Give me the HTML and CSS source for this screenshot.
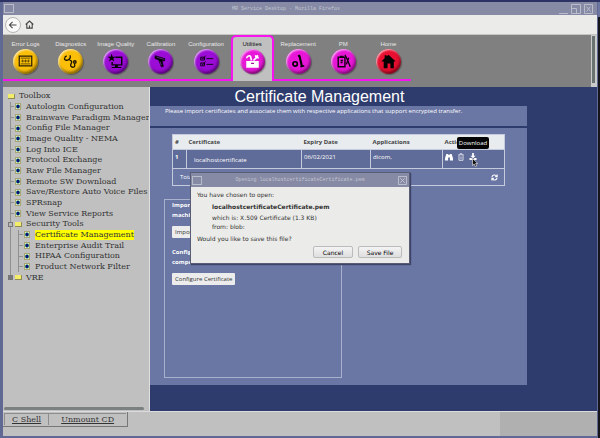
FILE: index.html
```html
<!DOCTYPE html>
<html lang="en">
<head>
    <meta charset="UTF-8">
    <meta name="viewport" content="width=device-width, initial-scale=1.0">
    <title>MR Service Desktop</title>
    <link rel="stylesheet" href="styles.css">
</head>
<body>
    <!-- Window title bar -->
    <header class="titlebar">
        <span class="win-menu"></span>
        <span class="win-title">MR Service Desktop - Mozilla Firefox</span>
        <svg class="win-buttons" viewBox="0 0 36 12" fill="none" stroke="#b9bccb">
            <path d="M1 10.5h9"/>
            <path d="M13.5 1.5h9v9h-9zM13.5 5.5h5v5"/>
            <path d="M26.5 1.5h8v9h-8zM28.5 3.5l4 5M32.5 3.5l-4 5"/>
        </svg>
    </header>

    <div class="toolbar">
        <button class="back" aria-label="Back">
            <svg viewBox="0 0 16 16" fill="none" stroke="#444" stroke-width="1.2"><path d="M12 8H4.500M7.500 4.500L4 8l3.500 3.500"/></svg>
        </button>
        <button class="home-btn" aria-label="Home page">
            <svg viewBox="0 0 10 10" fill="none" stroke="#444" stroke-width="1.2"><path d="M.8 5L5 1.200 9.200 5M2 4.500V9h6V4.500M5 9V6.200"/></svg>
        </button>
    </div>

    <!-- Tabs -->
    <nav class="tabs">
        <ul>
            <li><a href="#errors">Error Logs
                <svg class="ball gold" viewBox="0 0 26 26"><path d="M6.500 7.500h13v10h-13z" fill="none" stroke="#2b2000" stroke-width="1.300"/><path d="M8 9.500h10M8 15.500h10M8.500 12.500h9M10 11v3M13 11v3M16 11v3" stroke="#5c4500" stroke-width=".9"/></svg></a></li>
            <li><a href="#diagnostics">Diagnostics
                <svg class="ball gold" viewBox="0 0 26 26" fill="none" stroke="#1c1500" stroke-width="1.400"><path d="M7.500 8.500C5.500 11 8 12 10 11.500S13.500 9 12.500 6.500M7 8.500l2-1.500M12 11.500c3 .5 2.500 2.500 1.500 4s0 3.500 2 3.500 2.500-2 1.500-3.500"/><circle cx="17.500" cy="13.500" r="1.300"/></svg></a></li>
            <li><a href="#quality">Image Quality
                <svg class="ball purple" viewBox="0 0 26 26"><path d="M13 8.500h6.500v8H9.500v-3" fill="none" stroke="#0a0010" stroke-width="1.500"/><path d="M9 19.800h10v-1.200h-3.500v-2h-3v2H9z"/><path d="M9 5l1 3h3.200l-2.500 2 1 3L9 11.200 6.300 13l1-3-2.500-2H8z"/></svg></a></li>
            <li><a href="#calibration">Calibration
                <svg class="ball purple" viewBox="0 0 26 26"><path d="M7.500 7l10 3-.5 2.500-2.500-.5 1.500 6-2 .700-3-7.500-3.700-1.200z" stroke="#120020" stroke-width=".8"/><path d="M9 8.500l7.500 2.200M12.500 13l1.500 4" stroke="#8a35b5" stroke-width=".7"/></svg></a></li>
            <li><a href="#configuration">Configuration
                <svg class="ball purple" viewBox="0 0 26 26" fill="none" stroke="#12001c"><path d="M7 8.500h4v3H7zM7 14.500h4v3H7zM13 10h7M13 16h7M8 9l1 1.500 3-3.500M8 15l1 1.500 3-3.500"/></svg></a></li>
            <li class="active"><a href="#utilities">Utilities
                <svg class="ball pink" viewBox="0 0 26 26"><path d="M6.500 12.500h13v7h-13z" fill="#fff"/><path d="M7 9.500c0-2 3-3.500 4-1.500l1 4M18.500 6.500l-1.500 2.500-3 3M16 6.500l1 2.500 2.500 0" fill="none" stroke="#fff" stroke-width="1.700"/><path d="M11.500 15h3" stroke="#a0109a" stroke-width="1.300"/></svg></a></li>
            <li><a href="#replacement">Replacement
                <svg class="ball pink" viewBox="0 0 26 26" fill="none" stroke="#000"><circle cx="9.500" cy="15.500" r="2.300" stroke-width="1.700"/><path d="M14 7l2.500 11" stroke-width="2.200"/><path d="M12.500 7.500l2-1M15 18.500l4-1" stroke-width="1.700"/></svg></a></li>
            <li><a href="#pm">PM
                <svg class="ball pink" viewBox="0 0 26 26" fill="none" stroke="#100010"><path d="M7.500 8.500h7v10h-7z" stroke-width="1.500"/><path d="M9.500 8h3.500" stroke-width="2"/><path d="M10 12h2.500M10 14h2M14.500 6l2.500 5 3 7.500M18.500 9l-2.500 7" stroke-width="1.400"/></svg></a></li>
            <li><a href="#home">Home
                <svg class="ball red" viewBox="0 0 26 26"><path d="M5.500 13L9 9.500V6.500h2v1.300L13 6l7.500 7h-2v7H15v-5h-3v5H8v-7z"/></svg></a></li>
        </ul>
        <span class="scroll"></span>
    </nav>

    <main>
        <!-- Toolbox tree -->
        <aside>
            <ul class="tree">
                <li class="root"><i class="folder"></i><a href="#toolbox">Toolbox</a></li>
                <li class="leaf"><i class="page"></i><a href="#t1">Autologin Configuration</a></li>
                <li class="leaf"><i class="page"></i><a href="#t2">Brainwave Paradigm Manager</a></li>
                <li class="leaf"><i class="page"></i><a href="#t3">Config File Manager</a></li>
                <li class="leaf"><i class="page"></i><a href="#t4">Image Quality - NEMA</a></li>
                <li class="leaf"><i class="page"></i><a href="#t5">Log Into ICE</a></li>
                <li class="leaf"><i class="page"></i><a href="#t6">Protocol Exchange</a></li>
                <li class="leaf"><i class="page"></i><a href="#t7">Raw File Manager</a></li>
                <li class="leaf"><i class="page"></i><a href="#t8">Remote SW Download</a></li>
                <li class="leaf"><i class="page"></i><a href="#t9">Save/Restore Auto Voice Files</a></li>
                <li class="leaf"><i class="page"></i><a href="#t10">SPRsnap</a></li>
                <li class="leaf"><i class="page"></i><a href="#t11">View Service Reports</a></li>
                <li class="branch"><i class="toggle"></i><i class="folder"></i><a href="#security">Security Tools</a></li>
                <li class="leaf sub"><i class="page"></i><a class="selected" href="#s1">Certificate Management</a></li>
                <li class="leaf sub"><i class="page"></i><a href="#s2">Enterprise Audit Trail</a></li>
                <li class="leaf sub"><i class="page"></i><a href="#s3">HIPAA Configuration</a></li>
                <li class="leaf sub"><i class="page"></i><a href="#s4">Product Network Filter</a></li>
                <li class="branch last"><i class="toggle plus"></i><i class="folder"></i><a href="#vre">VRE</a></li>
            </ul>
            <span class="scroll-x"></span>
        </aside>

        <section class="content">
            <h1>Certificate Management</h1>
            <p class="intro">Please import certificates and associate them with respective applications that support encrypted transfer.</p>
            <div class="panel">
                <table>
                    <thead>
                        <tr>
                            <th class="num">#</th>
                            <th class="cert">Certificate</th>
                            <th class="expiry">Expiry Date</th>
                            <th class="apps">Applications</th>
                            <th>Actions</th>
                        </tr>
                    </thead>
                    <tbody>
                        <tr>
                            <td><b>1</b></td>
                            <td class="name">localhostcertificate</td>
                            <td>06/02/2021</td>
                            <td>dicom,</td>
                            <td>
                                <div class="actions">
                                    <button aria-label="View"><svg viewBox="0 0 9 9" fill="#fff"><path d="M1.500 1h2v1h2V1h2L9 6v2.500H5.500V5h-2v3.500H0V6z"/></svg></button>
                                    <button aria-label="Delete"><svg viewBox="0 0 9 9" fill="none" stroke="#e4e6ef"><path d="M1.500 2h6M3.500 1.500V.8h2v.7M2.200 2.500v5.700h4.600V2.500M4.500 4v3"/></svg></button>
                                    <button class="download" aria-label="Download"><svg viewBox="0 0 9 9" fill="#fff"><path d="M3.500 0h2v3h2l-3 3-3-3h2zM.5 5.500h2l2 1.500 2-1.500h2V8h-8z"/></svg>
                                        <span class="tooltip">Download</span>
                                        <svg class="cursor" viewBox="0 0 7 9"><path d="M.5.500v7l1.700-1.500 1.200 2.600 1.300-.6-1.100-2.500h2.200z" fill="#111" stroke="#ddd" stroke-width=".7"/></svg>
                                    </button>
                                </div>
                            </td>
                        </tr>
                    </tbody>
                    <tfoot>
                        <tr>
                            <td colspan="5">
                                <div class="total">
                                    <span>Total</span>
                                    <button aria-label="Refresh"><svg viewBox="0 0 8 8" fill="none" stroke="#fff" stroke-width="1.200"><path d="M1 3.500A3 3 0 0 1 6.500 2.500M7 4.500A3 3 0 0 1 1.500 5.500M7 .5v2.500H4.800M1 7.500V5h2.200"/></svg></button>
                                </div>
                            </td>
                        </tr>
                    </tfoot>
                </table>

                <div class="setup">
                    <h2>Import<br>machine</h2>
                    <button>Import</button>
                    <h2>Config<br>compo</h2>
                    <button>Configure Certificate</button>
                </div>
            </div>
        </section>
    </main>

    <footer>
        <div class="links">
            <a href="#shell">C Shell</a>
            <a href="#unmount">Unmount CD</a>
        </div>
        <span class="status"></span>
    </footer>

    <!-- Download dialog -->
    <div class="dialog" role="dialog" aria-label="Opening file">
        <div class="dialog-bar">
            <span class="win-menu"></span>
            <span class="win-title">Opening localhostcertificateCertificate.pem</span>
            <button class="close" aria-label="Close"><svg viewBox="0 0 10 10" fill="none" stroke="#c3c6d2"><path d="M.5.500h9v9h-9zM2.500 2.500l5 5M7.500 2.500l-5 5"/></svg></button>
        </div>
        <div class="dialog-body">
            <p>You have chosen to open:</p>
            <div class="file">
                <b>localhostcertificateCertificate.pem</b>
                <span>which is: X.509 Certificate (1.3 KB)</span>
                <span>from: blob:</span>
            </div>
            <p>Would you like to save this file?</p>
            <div class="buttons">
                <button>Cancel</button>
                <button>Save File</button>
            </div>
        </div>
    </div>
</body>
</html>
```

FILE: styles.css
```css
* {
    box-sizing: border-box;
}
body {
    margin: 0;
    padding: 2px 3px;
    min-height: 100vh;
    display: flex;
    flex-direction: column;
    position: relative;
    font-family: "Open Sans", sans-serif;
    font-size: 6px;
    /* strips of the desktop seen round the window */
    background:
        linear-gradient(#2c3263, #2c3263) top / 100% 2px no-repeat,
        linear-gradient(#6c76a0 17px, #15151b 17px) right / 2px 100% no-repeat,
        #5f6993;
}
button {
    font: inherit;
    padding: 0;
    border: 0;
    background: none;
}
svg {
    display: block;
}

/* Title bar */
.titlebar {
    display: flex;
    align-items: center;
    height: 13px;
    background: #868aa4;
}
.win-menu {
    width: 10px;
    height: 9px;
    border: 1px solid #b9bccb;
    margin-left: 1px;
}
.win-title {
    flex: 1;
    text-align: center;
    color: #c3c6d2;
    font-family: "Liberation Mono", monospace;
    font-size: 5px;
}
.win-buttons {
    width: 36px;
    height: 12px;
    margin-right: 3px;
}

/* Browser toolbar */
.toolbar {
    display: flex;
    align-items: center;
    gap: 4px;
    height: 20px;
    padding-left: 2px;
    background: #ebebe9;
    border-bottom: 1px solid #c5c5c2;
}
.back {
    width: 16px;
    height: 16px;
    border: 1px solid #b5b5b3;
    border-radius: 50%;
    background: #fafafa;
}
.home-btn {
    width: 9px;
    height: 9px;
}

/* Tabs */
.tabs {
    display: flex;
    justify-content: space-between;
    height: 52px;
    background: #808080;
}
.tabs ul {
    display: flex;
    list-style: none;
    width: 408px;
    height: 46px;
    margin: 0;
    padding: 0;
    border-bottom: 2px solid #f813f0;
}
.tabs li {
    flex: 1;
    padding-top: 5px;
}
.tabs a {
    display: flex;
    flex-direction: column;
    align-items: center;
    gap: 1px;
    color: #e8e8e8;
    font-family: "Liberation Sans", Arial, sans-serif;
    font-size: 6px;
    line-height: 8px;
    white-space: nowrap;
    text-decoration: none;
}
.tabs li.active {
    flex: none;
    width: 43px;
    margin: 0 2px -2px;
    padding-top: 3px;
    border: 2px solid #f813f0;
    border-bottom: 0;
    border-radius: 5px 5px 0 0;
    background: #c0c0c0;
}
.tabs .active a {
    color: #111;
}
.ball {
    width: 25px;
    height: 25px;
    border-radius: 50%;
    box-shadow:
        inset 1px 1px 2px rgba(255, 255, 255, 0.7),
        inset -1px -2px 3px rgba(0, 0, 0, 0.5),
        1px 1px 1px rgba(0, 0, 0, 0.3);
}
.gold {
    background: #fbbf09;
}
.purple {
    background: #9b0cd6;
}
.pink {
    background: #e817d8;
}
.red {
    background: #e80f30;
}
.scroll {
    width: 6px;
    background: #6a7272;
    border: solid #c9ccca;
    border-width: 1px 2px 4px 1px;
}

/* Toolbox tree */
main {
    flex: 1;
    display: flex;
    background: #2e3b6d;
}
aside {
    width: 147px;
    display: flex;
    flex-direction: column;
    justify-content: space-between;
    padding: 4px 1px 1px;
    background: #c0c0c0;
    border-right: 1px solid #e0e0e0;
    overflow: hidden;
}
.tree {
    display: grid;
    grid-auto-rows: 1fr;
    height: 192px;
    margin: 0;
    padding: 0 0 0 3px;
    list-style: none;
    font-family: "DejaVu Serif", serif;
    font-size: 8px;
    line-height: 10px;
    white-space: nowrap;
}
.tree li {
    display: flex;
    align-items: center;
    background: linear-gradient(#909090, #909090) 3px 0 / 1px 100% no-repeat;
}
.tree .root {
    background: none;
}
.tree .last {
    background-size: 1px 50%;
}
.tree a {
    color: #333;
    text-decoration: none;
}
.tree .selected {
    background: #ffff00;
}
.folder {
    width: 7px;
    height: 5px;
    margin: 0 4px 0 1px;
    background: #f2ec6a;
    border: solid #8f8b55;
    border-width: 0 1px 1px 0;
}
.page {
    width: 6px;
    height: 7px;
    margin-right: 5px;
    border: 1px solid #a8a670;
    background: radial-gradient(circle, #10107a 35%, #3c9a90 55%, #e9e9c0 75%);
}
.leaf::before {
    content: "";
    width: 4px;
    height: 1px;
    margin: 0 1px 0 3px;
    background: #909090;
}
.tree .sub::before {
    align-self: stretch;
    height: auto;
    margin-left: 11px;
    border-left: 1px solid #909090;
    background: linear-gradient(#909090, #909090) 0 50% / 100% 1px no-repeat;
}
.toggle {
    width: 5px;
    height: 5px;
    margin: 0 2px 0 1px;
    border: 1px solid #777;
    background: #b8b8b8;
}
.branch .folder {
    margin-left: 0;
}
.plus {
    background: #777;
}
.scroll-x {
    height: 3px;
    margin-right: 4px;
    border-radius: 2px;
    background: #7b8080;
}

/* Content */
.content {
    width: 377px;
}
h1 {
    margin: 0;
    padding-right: 38px;
    text-align: center;
    color: #fff;
    font-family: "Liberation Sans", Arial, sans-serif;
    font-size: 16px;
    font-weight: normal;
    line-height: 19px;
}
.intro {
    margin: 0 0 2px;
    height: 20px;
    padding-left: 15px;
    background: #6a76a4;
    color: #fff;
    line-height: 10px;
    white-space: nowrap;
}
.panel {
    height: 257px;
    padding: 6px 22px 0;
    background: #6a76a4;
}
table {
    width: 100%;
    border-collapse: collapse;
    table-layout: fixed;
    color: #fff;
    line-height: 8px;
    border: 1px solid #c5cbdc;
}
th {
    height: 15px;
    padding: 0 2px;
    text-align: left;
    background: #e8ecef;
    color: #444;
}
td {
    height: 19px;
    padding: 3px 2px 0;
    vertical-align: top;
    border: 1px solid #c5cbdc;
    background: #5f6b98;
}
tfoot td {
    height: 17px;
    background: #6a76a4;
}
.num {
    width: 14px;
}
.cert {
    width: 115px;
}
.expiry {
    width: 69px;
}
.apps {
    width: 72px;
}
td.name {
    padding: 6px 0 0 7px;
}
.actions {
    display: flex;
    gap: 4px;
}
.actions svg {
    width: 8px;
    height: 8px;
}
.download {
    position: relative;
}
.tooltip {
    position: absolute;
    bottom: 12px;
    left: -12px;
    width: 32px;
    border-radius: 2px;
    background: #050505;
    color: #fff;
    line-height: 12px;
}
.download .cursor {
    position: absolute;
    top: 5px;
    left: 3px;
    width: 7px;
    height: 9px;
}
.total {
    display: flex;
    justify-content: space-between;
    align-items: center;
    padding: 1px 4px 0 5px;
}
.total svg {
    width: 7px;
    height: 7px;
}
.setup {
    width: 178px;
    height: 179px;
    margin: 13px 0 0 -8px;
    padding: 0 7px;
    border: 1px solid #a9b1cd;
}
h2 {
    margin: 0 0 6px;
    color: #fff;
    font-size: 6px;
    line-height: 10px;
}
.setup button {
    display: block;
    height: 12px;
    margin-bottom: 9px;
    padding: 0 3px;
    border-radius: 1px;
    background: #ececec;
    color: #333;
}

/* Bottom bar */
footer {
    display: flex;
    justify-content: space-between;
    height: 25px;
    background: #c0c0c0;
    border-top: 1px solid #dcdcdc;
}
.links {
    display: flex;
    height: 15px;
    padding: 1px;
    border: solid #777;
    border-width: 0 1px 1px 0;
}
.links a {
    padding: 0 12px;
    border: solid #8d8d8d;
    border-width: 1px 0 0 1px;
    color: #333;
    font-family: "DejaVu Serif", serif;
    font-size: 8px;
    line-height: 11px;
}
.links a:first-child {
    padding: 0 7px;
}
.status {
    width: 97px;
    background: #b0b0b0;
}

/* Dialog */
.dialog {
    position: absolute;
    top: 172px;
    left: 190px;
    width: 220px;
    border: 1px solid #585d75;
    box-shadow: 1px 1px 1px #3c4468;
    background: #ebebe9;
    font-family: "DejaVu Sans", sans-serif;
    color: #333;
}
.dialog-bar {
    display: flex;
    align-items: center;
    height: 14px;
    padding-right: 2px;
    background: #868aa4;
}
.close {
    width: 9px;
    height: 9px;
}
.dialog-body {
    padding: 3px 7px 5px 6px;
    line-height: 9px;
}
.dialog p {
    margin: 0;
}
.file {
    display: flex;
    flex-direction: column;
    margin: 3px 0 3px 15px;
}
.file b {
    margin-bottom: 2px;
}
.buttons {
    display: flex;
    justify-content: flex-end;
    gap: 5px;
    margin-top: 3px;
}
.buttons button {
    width: 40px;
    height: 12px;
    border: 1px solid #bbb;
    border-radius: 2px;
    background: linear-gradient(#f4f4f4, #dedede);
}
.buttons button:last-child {
    width: 44px;
}
```
